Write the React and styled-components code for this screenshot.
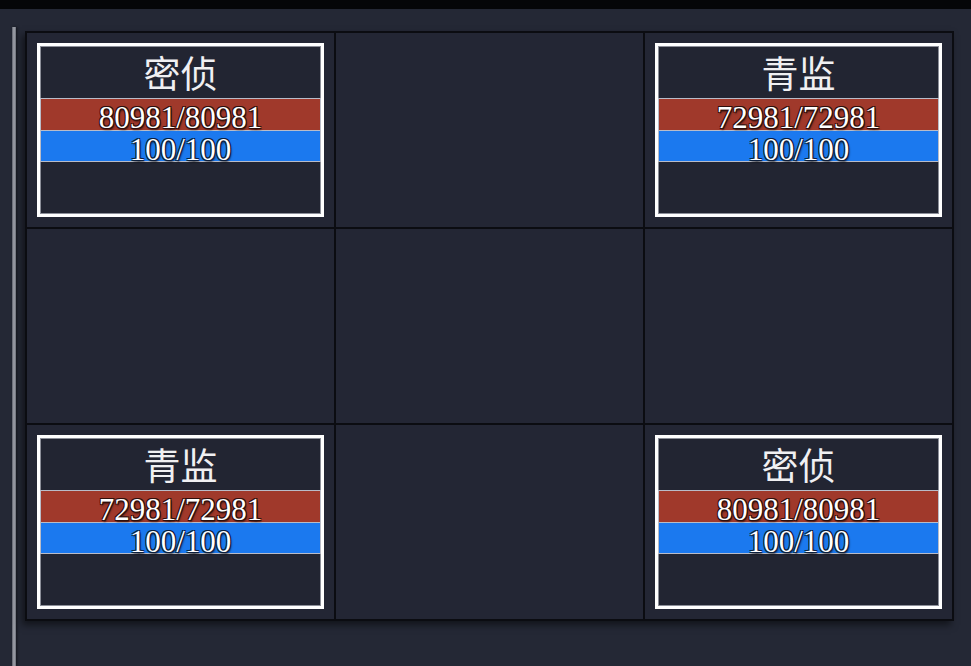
import React from "react";
import styled, { createGlobalStyle } from "styled-components";

const GlobalStyle = createGlobalStyle`
  html, body { margin: 0; padding: 0; background: #242835; }
  body { font-family: "Noto Sans", "Noto Sans CJK SC", sans-serif; }
  #root { min-height: 100vh; }
`;

const Page = styled.div`
  display: flex;
  flex-direction: column;
  min-height: 100vh;
  background: #242835;
`;

const TopBar = styled.div`
  height: 9px;
  background: #050608;
  flex-shrink: 0;
`;

const Body = styled.div`
  flex: 1;
  display: flex;
  align-items: stretch;
`;

const Rail = styled.div`
  width: 4px;
  margin-left: 12px;
  margin-top: 18px;
  background: linear-gradient(to right, #5d606a, #a3a6ae 50%, #6a6d77);
  box-shadow: 1px 0 3px rgba(0, 0, 0, 0.5);
`;

const Board = styled.div`
  margin-left: 9px;
  margin-top: 22px;
  align-self: flex-start;
  display: grid;
  grid-template-columns: repeat(3, 307px);
  grid-template-rows: repeat(3, 194px);
  gap: 2px;
  padding: 2px;
  background: #0b0c11;
  box-shadow: -3px 4px 7px rgba(0, 0, 0, 0.5);
`;

const Cell = styled.div`
  background: #232634;
  padding: 10px;
  display: flex;
`;

const Card = styled.div`
  flex: 1;
  border: 3px solid #ffffff;
  box-shadow: inset 0 0 0 1px #8c8f99;
  background: #222532;
  display: flex;
  flex-direction: column;
`;

const Name = styled.div`
  height: 52px;
  line-height: 52px;
  text-align: center;
  font-family: "Noto Sans CJK SC", sans-serif;
  font-size: 37px;
  color: #f0f0f2;
`;

const Bar = styled.div`
  height: ${(p) => p.$h}px;
  box-sizing: border-box;
  background: ${(p) => p.$color};
  border: 1px solid #b9bcc8;
  border-top-width: ${(p) => (p.$first ? 1 : 0)}px;
  text-align: center;
  font-family: "Liberation Serif", serif;
  font-size: 31px;
  line-height: ${(p) => p.$lh}px;
  color: #ffffff;
  overflow: visible;
  white-space: nowrap;
  text-shadow:
    1px 1px 0 ${(p) => p.$shade},
    -1px -1px 0 ${(p) => p.$shade},
    1px -1px 0 ${(p) => p.$shade},
    -1px 1px 0 ${(p) => p.$shade},
    1px 2px 2px rgba(0, 0, 0, 0.7);
`;

const units = {
  spy: { name: "密侦", hp: "80981/80981" },
  guard: { name: "青监", hp: "72981/72981" },
};

const layout = ["spy", null, "guard", null, null, null, "guard", null, "spy"];

function Unit({ data }) {
  return (
    <Card>
      <Name>{data.name}</Name>
      <Bar $first $h={33} $lh={38} $color="#a0392b" $shade="#2e0f0c">
        {data.hp}
      </Bar>
      <Bar $h={31} $lh={37} $color="#1b79ef" $shade="#0b1e3c">
        100/100
      </Bar>
    </Card>
  );
}

export default function App() {
  return (
    <>
      <GlobalStyle />
      <Page>
        <TopBar />
        <Body>
          <Rail />
          <Board>
            {layout.map((k, i) => (
              <Cell key={i}>{k && <Unit data={units[k]} />}</Cell>
            ))}
          </Board>
        </Body>
      </Page>
    </>
  );
}
